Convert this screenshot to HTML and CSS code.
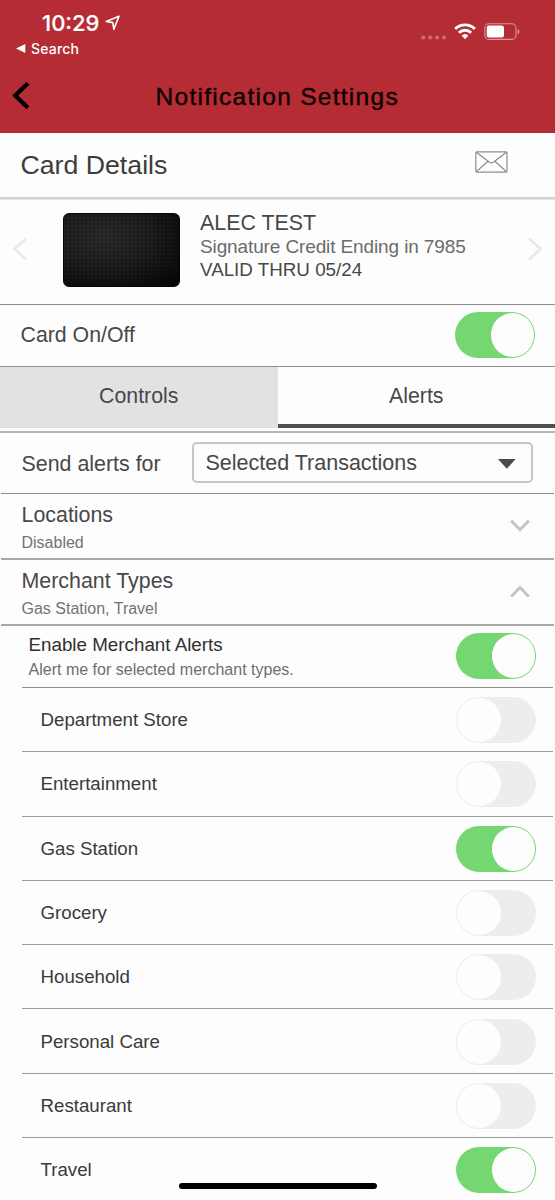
FILE: index.html
```
<!DOCTYPE html>
<html lang="en">
<head>
<meta charset="utf-8">
<title>Notification Settings</title>
<link rel="stylesheet" href="styles.css">
</head>
<body>
<div class="screen">
  <header class="top">
    <div class="status">
      <div class="status-left">
        <div class="clock"><span>10:29</span>
          <svg class="locate" width="16" height="16" viewBox="0 0 16 16"><path d="M1.2 6.5 14 1.2 8.8 14.2 7.8 7.6Z" fill="none" stroke="#fff" stroke-width="1.6" stroke-linejoin="round"/></svg>
        </div>
        <div class="back-app"><svg width="10" height="9" viewBox="0 0 10 9"><path d="M0 4.5 9.3 0v9Z" fill="#fff"/></svg><span>Search</span></div>
      </div>
      <div class="status-right">
        <svg width="26" height="5" viewBox="0 0 26 5"><g fill="#fff" opacity=".3"><circle cx="2.3" cy="2.5" r="2.1"/><circle cx="9.2" cy="2.5" r="2.1"/><circle cx="16.1" cy="2.5" r="2.1"/><circle cx="23" cy="2.5" r="2.1"/></g></svg>
        <svg class="wifi" width="22" height="17" viewBox="0 0 22 17"><g fill="none" stroke="#fff" stroke-width="2.9"><path d="M1.2 5.9a14 14 0 0 1 19.6 0"/><path d="M4.9 9.8a8.7 8.7 0 0 1 12.2 0"/></g><path d="M7.6 12.5a5 5 0 0 1 6.8 0L11 16.2Z" fill="#fff"/></svg>
        <svg class="battery" width="36" height="18" viewBox="0 0 36 18"><rect x=".8" y=".8" width="31.2" height="15.6" rx="4.2" fill="none" stroke="#fff" stroke-opacity=".5" stroke-width="1.1"/><path d="M33.6 6v5.3c2.4-1 2.4-4.3 0-5.3Z" fill="#fff" opacity=".5"/><rect x="2.7" y="2.6" width="17.3" height="12" rx="2.3" fill="#fff"/></svg>
      </div>
    </div>
    <div class="nav">
      <svg class="nav-back" width="18" height="29" viewBox="0 0 18 29"><path d="M15.9 2.3 3.2 14.5 15.9 26.7" fill="none" stroke="#000" stroke-width="4.2"/></svg>
      <h1>Notification Settings</h1>
    </div>
  </header>

  <section class="details-head">
    <h2>Card Details</h2>
    <svg width="33" height="22" viewBox="0 0 33 22"><g fill="none" stroke="#8d8d8d" stroke-width="1.2"><rect x=".8" y=".8" width="31.2" height="20.3" rx="1"/><path d="M1 1 13.8 10.8q2.6 2 5.2 0L31.8 1M1.2 20.8 13 10.3M31.6 20.8 19.8 10.3"/></g></svg>
  </section>

  <section class="card-row">
    <svg class="prev" width="16" height="26" viewBox="0 0 16 26"><path d="M14 2.5 2.5 13 14 23.5" fill="none" stroke="#ebebeb" stroke-width="2.8"/></svg>
    <div class="card-art"></div>
    <div class="card-info">
      <p class="holder">ALEC TEST</p>
      <p class="product">Signature Credit Ending in 7985</p>
      <p class="valid">VALID THRU 05/24</p>
    </div>
    <svg class="next" width="16" height="26" viewBox="0 0 16 26"><path d="M2 2.5 13.5 13 2 23.5" fill="none" stroke="#e8e8e8" stroke-width="2.8"/></svg>
  </section>

  <section class="power-row"><span>Card On/Off</span><i class="toggle on"></i></section>

  <nav class="tabs"><div class="tab">Controls</div><div class="tab active">Alerts</div></nav>

  <section class="send-row">
    <span>Send alerts for</span>
    <div class="select"><span>Selected Transactions</span><svg width="18" height="10" viewBox="0 0 18 10"><path d="M0 0h17.6L8.8 9.8Z" fill="#4b4b4b"/></svg></div>
  </section>

  <section class="group">
    <div><h3>Locations</h3><p>Disabled</p></div>
    <svg width="20" height="14" viewBox="0 0 20 14"><path d="M1.2 1.7 10 10.7 18.8 1.7" fill="none" stroke="#c3c3c3" stroke-width="2.7"/></svg>
  </section>
  <section class="group">
    <div><h3>Merchant Types</h3><p>Gas Station, Travel</p></div>
    <svg width="20" height="14" viewBox="0 0 20 14"><path d="M1.2 11.5 10 2.5 18.8 11.5" fill="none" stroke="#c3c3c3" stroke-width="2.7"/></svg>
  </section>

  <section class="merchant">
    <div class="enable"><div><h4>Enable Merchant Alerts</h4><p>Alert me for selected merchant types.</p></div><i class="toggle on"></i></div>
    <div class="item"><span>Department Store</span><i class="toggle"></i></div>
    <div class="item"><span>Entertainment</span><i class="toggle"></i></div>
    <div class="item"><span>Gas Station</span><i class="toggle on"></i></div>
    <div class="item"><span>Grocery</span><i class="toggle"></i></div>
    <div class="item"><span>Household</span><i class="toggle"></i></div>
    <div class="item"><span>Personal Care</span><i class="toggle"></i></div>
    <div class="item"><span>Restaurant</span><i class="toggle"></i></div>
    <div class="item"><span>Travel</span><i class="toggle on"></i></div>
  </section>
  <div class="home-bar"></div>
</div>
</body>
</html>
```
FILE: styles.css
```
* { box-sizing: border-box; margin: 0; padding: 0; }
body { background: #fdfdfd; font-family: "Liberation Sans", Arial, sans-serif; color: #484848; }
h1, h2, h3, h4 { font-weight: 400; }
svg { display: block; flex: none; }
.screen { position: relative; width: 555px; height: 1200px; overflow: hidden; background: #fdfdfd; }

.top { height: 133px; background: #b52c34; }
.status { display: flex; justify-content: space-between; height: 60px; font-family: Inter, sans-serif; color: #fff; }
.status-left { padding: 9px 0 0 16px; }
.clock { display: flex; align-items: center; height: 28px; padding-left: 26px; font-size: 22px; font-weight: 500; gap: 6px; }
.clock span { letter-spacing: 0; -webkit-text-stroke: .2px #fff; }
.back-app { display: flex; align-items: center; gap: 5px; height: 22px; font-size: 14px; font-weight: 500; letter-spacing: .2px; }
.status-right { display: flex; align-items: flex-start; padding: 23px 35px 0 0; }
.status-right > svg:first-child { margin-top: 12px; }
.wifi { margin-left: 7px; }
.battery { margin-left: 8px; }
.nav { display: flex; height: 73px; align-items: center; padding-left: 12px; }
.nav-back { margin-bottom: 3px; }
h1 { flex: 1; padding-left: 125.5px; font-size: 24.5px; line-height: 30px; letter-spacing: 1.28px; color: #0c0203; -webkit-text-stroke: .4px #0c0203; }

.details-head { display: flex; align-items: center; justify-content: space-between; height: 66px; padding: 0 47px 0 20.5px; border-bottom: 2px solid #d2d2d2; box-shadow: 0 1px 1px #e6e6e6; }
h2 { font-size: 26.7px; color: #3c3c3c; }
.details-head svg { margin-bottom: 6px; }

.card-row { display: flex; height: 106px; padding: 0 12px; border-bottom: 1px solid #8f8f8f; }
.prev, .next { margin-top: 37px; }
.card-art { width: 117px; height: 74px; margin: 14px 0 0 35px; border-radius: 6px; background: radial-gradient(circle, rgba(0,0,0,.3) 1px, transparent 1.3px) 0 0 / 4px 4px, radial-gradient(ellipse at 35% 32%, #2c2c2c, #1d1d1d 45%, #060606 95%); border: 1px solid #060606; }
.card-info { flex: 1; padding: 12px 0 0 20px; }
.holder { font-size: 21.4px; line-height: 24px; color: #484848; }
.product { font-size: 19px; line-height: 23px; letter-spacing: -.12px; color: #6b6b6b; }
.valid { font-size: 18.8px; line-height: 24px; color: #484848; }

.power-row { display: flex; align-items: center; justify-content: space-between; height: 62px; padding: 0 20px 0 20.5px; border-bottom: 1px solid #8f8f8f; font-size: 21.3px; }
.power-row .toggle { margin-bottom: 1px; }
.toggle { display: block; flex: none; width: 80px; height: 46px; padding: 1px; border-radius: 23px; background: #ededed; }
.toggle::before { content: ""; display: block; width: 43.5px; height: 44px; border-radius: 50%; background: #fdfdfd; }
.toggle.on { background: #75d772; }
.toggle.on::before { margin-left: 34.5px; }

.tabs { display: flex; height: 66px; padding-bottom: 3px; border-bottom: 2px solid #b5b5b5; font-size: 21.3px; }
.tab { flex: 1; height: 61px; line-height: 59px; text-align: center; background: #e2e2e2; }
.tab.active { background: #fdfdfd; border-bottom: 4px solid #4f4f4f; }

.send-row { display: flex; align-items: center; justify-content: space-between; height: 61px; margin: 0 1px; padding: 0 21px 1px 20.5px; border-bottom: 1px solid #8e8e8e; font-size: 21.4px; }
.send-row > span { padding-top: 3px; }
.select { display: flex; align-items: center; justify-content: space-between; width: 341px; height: 41px; padding: 1px 15px 0 11.5px; border: 2px solid #c6c6c6; border-radius: 5px; font-size: 21.5px; }
.select svg { margin-top: 2px; }

.group { display: flex; justify-content: space-between; height: 66px; margin: 0 1px; padding: 8px 24px 0 20.5px; border-bottom: 2px solid #a8a8a8; }
.group h3 { font-size: 21.4px; line-height: 26px; }
.group p { font-size: 16px; line-height: 29px; color: #737373; }
.group svg { margin-top: 17px; }

.merchant { padding: 0 2px 0 22px; }
.enable { display: flex; justify-content: space-between; height: 62px; padding: 7px 17px 0 6.5px; border-bottom: 1px solid #909090; }
.enable h4 { font-size: 18.8px; line-height: 24px; color: #303030; }
.enable p { font-size: 16.03px; line-height: 25px; color: #6e6e6e; }
.item { display: flex; align-items: center; justify-content: space-between; height: 64.3px; padding: 1px 17px 0 18.5px; border-bottom: 1.5px solid #9c9c9c; font-size: 18.7px; color: #3a3a3a; }
.item:last-child { border-bottom-color: transparent; }
.home-bar { position: absolute; left: 179px; top: 1183px; width: 198px; height: 6px; border-radius: 3px; background: #000; }
```
